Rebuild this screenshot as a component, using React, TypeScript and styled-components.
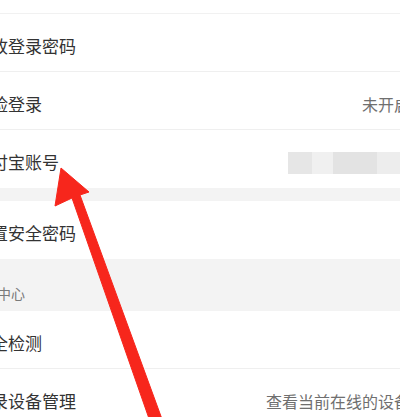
import React, { FC } from 'react';
import styled, { createGlobalStyle } from 'styled-components';

const GlobalStyle = createGlobalStyle`
  html, body {
    margin: 0;
    padding: 0;
    background: #ffffff;
    overflow: hidden;
  }

  body {
    font-family: 'Noto Sans CJK SC', 'Noto Sans', sans-serif;
  }
`;

const Page = styled.div`
  position: relative;
  width: 400px;
  height: 417px;
  overflow: hidden;
  background: #ffffff;
`;

// the screenshot is cropped: the list runs past both edges of the frame
const List = styled.div`
  display: flex;
  flex-direction: column;
  margin: 0 -30px 0 -26px;
`;

const TopStrip = styled.div`
  height: 14px;
  border-bottom: 1px solid #f1f1f1;
  box-sizing: border-box;
`;

const Row = styled.div<{ $noBorder?: boolean }>`
  display: flex;
  align-items: center;
  justify-content: space-between;
  gap: 12px;
  box-sizing: border-box;
  height: 58px;
  padding: 6px 20px 0 0;
  border-bottom: ${({ $noBorder }) => ($noBorder ? 'none' : '1px solid #efefef')};
  background: #ffffff;
`;

const Label = styled.span`
  font-size: 17px;
  line-height: 24px;
  color: #333333;
  white-space: nowrap;
`;

const Value = styled.span`
  font-size: 16px;
  line-height: 22px;
  color: #6f6f6f;
  white-space: nowrap;
`;

const Gap = styled.div`
  height: 13px;
  background: #f3f3f3;
`;

const SectionHeader = styled.div`
  display: flex;
  align-items: flex-end;
  box-sizing: border-box;
  height: 52px;
  padding-bottom: 8px;
  text-indent: -5px;
  background: #f3f3f3;
  font-size: 14px;
  line-height: 20px;
  color: #7a7a7a;
`;

const Mosaic = styled.div`
  display: flex;
  height: 22px;
  margin-top: 2px;
  margin-right: -10px;
`;

const Tile = styled.div<{ $w: number; $shade: string }>`
  width: ${({ $w }) => $w}px;
  height: 100%;
  background: ${({ $shade }) => $shade};
`;

const ArrowLayer = styled.svg`
  position: absolute;
  left: 0;
  top: 0;
  width: 400px;
  height: 417px;
  pointer-events: none;
`;

const tiles = [
  { w: 24, shade: '#e6e6e6' },
  { w: 21, shade: '#f0f0f0' },
  { w: 44, shade: '#e3e3e3' },
  { w: 43, shade: '#ededed' },
];

const RedArrow: FC = () => (
  <ArrowLayer viewBox='0 0 400 417'>
    <polygon
      points='61,168 89,192 80,195 166,430 153,430 72,198 55,206'
      fill='#f7261c'
      stroke='#f7261c'
      strokeWidth='1'
      strokeLinejoin='round'
    />
  </ArrowLayer>
);

const App: FC = () => (
  <Page>
    <GlobalStyle />
    <List>
      <TopStrip />

      <Row>
        <Label>修改登录密码</Label>
      </Row>

      <Row>
        <Label>刷脸登录</Label>
        <Value>未开启</Value>
      </Row>

      <Row $noBorder>
        <Label>支付宝账号</Label>
        <Mosaic>
          {tiles.map((t, i) => (
            <Tile key={i} $w={t.w} $shade={t.shade} />
          ))}
        </Mosaic>
      </Row>

      <Gap />

      <Row $noBorder>
        <Label>设置安全密码</Label>
      </Row>

      <SectionHeader>安全中心</SectionHeader>

      <Row>
        <Label>安全检测</Label>
      </Row>

      <Row $noBorder>
        <Label>登录设备管理</Label>
        <Value>查看当前在线的设备</Value>
      </Row>
    </List>

    <RedArrow />
  </Page>
);

export default App;
